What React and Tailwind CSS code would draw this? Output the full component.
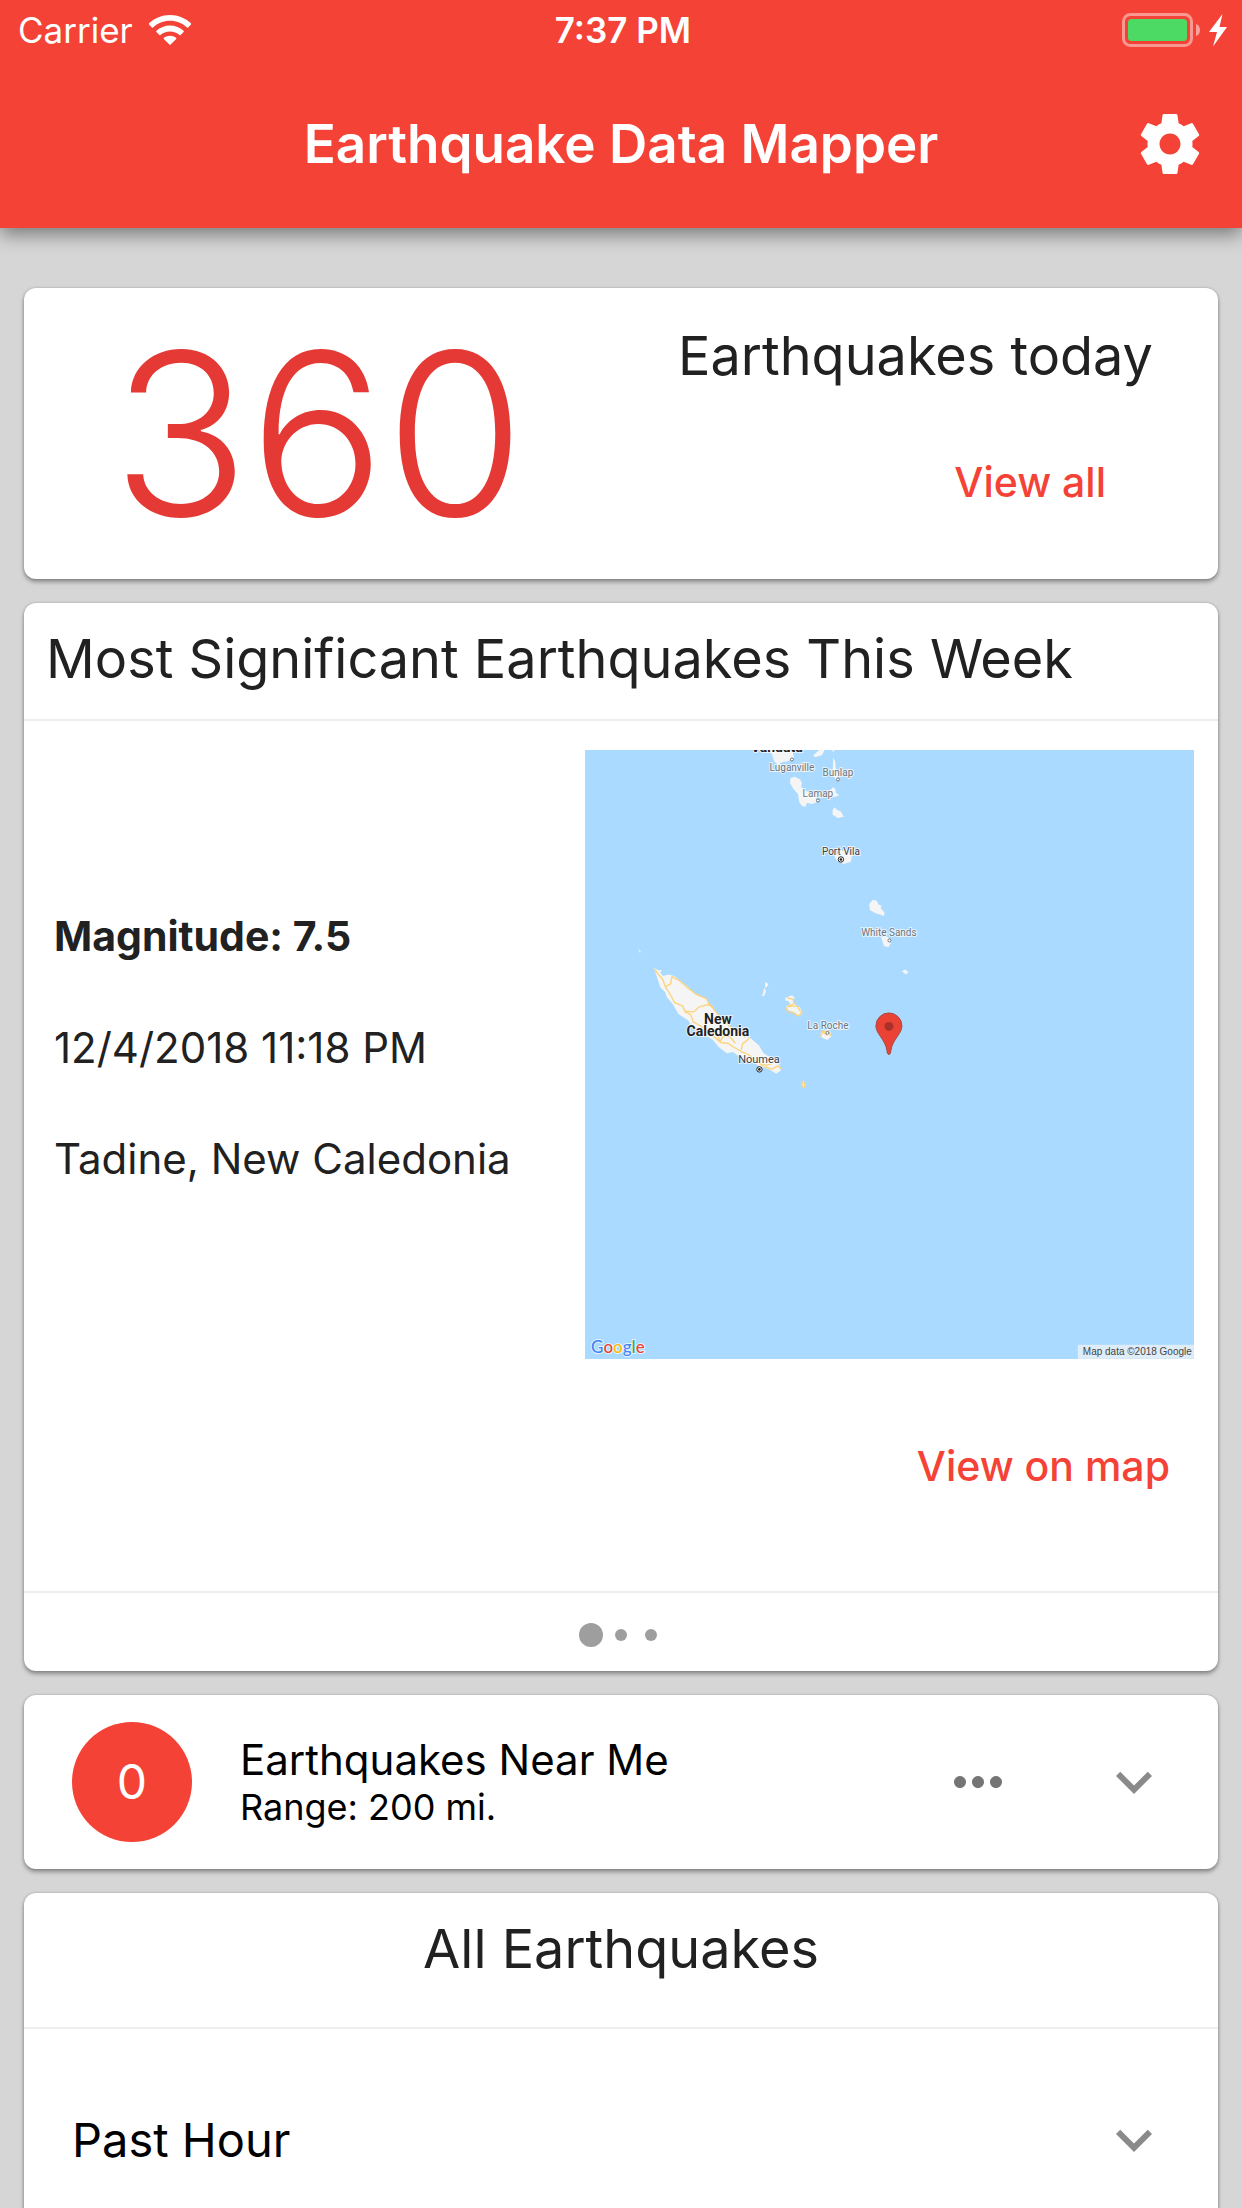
import React from "react";
import { MdExpandMore, MdMoreHoriz } from "react-icons/md";

function WifiIcon() {
  return (
    <svg viewBox="0 0 42 30" className="h-[30px] w-[42px]" fill="currentColor" aria-label="Wi-Fi">
      <path d="M21 0C13 0 5.600 3.100 0 8.300a.8.8 0 0 0 0 1.100l2.900 3c.3.300.8.300 1.100 0C8.600 8.100 14.500 5.700 21 5.700s12.400 2.400 17 6.700c.3.300.8.300 1.100 0l2.900-3a.8.8 0 0 0 0-1.100C36.400 3.100 29 0 21 0Z" />
      <path d="M21 10.500c-5.200 0-10 2-13.600 5.300-.3.300-.3.800 0 1.100l3 3c.3.300.7.300 1 0 2.600-2.200 5.900-3.500 9.600-3.500s7 1.300 9.600 3.500c.3.300.7.300 1 0l3-3c.3-.3.300-.8 0-1.100C31 12.500 26.200 10.500 21 10.500Z" />
      <path d="M21 20.700c-2.300 0-4.400.8-6.100 2.100-.3.300-.4.800-.1 1.100l5.600 5.700c.4.400.8.400 1.200 0l5.600-5.700c.3-.3.200-.8-.1-1.100-1.700-1.300-3.800-2.100-6.100-2.100Z" />
    </svg>
  );
}

function BatteryIcon() {
  return (
    <svg viewBox="0 0 106 36" className="h-9 w-[106px]" aria-label="Battery charging">
      <rect x="1.500" y="2.500" width="68" height="31" rx="7" fill="none" stroke="#fff" strokeOpacity="0.45" strokeWidth="3" />
      <rect x="6" y="7" width="59" height="22" rx="3.500" fill="#4cd964" />
      <path d="M74 12c2.500.6 4 3 4 6s-1.500 5.400-4 6Z" fill="#fff" fillOpacity="0.5" />
      <path d="M100.500 2 87 20h8l-4 14.500L105 15h-7.500Z" fill="#fff" />
    </svg>
  );
}

function GearIcon() {
  return (
    <svg viewBox="0 0 24 24" className="size-[72px]" fill="currentColor" aria-hidden="true">
      <path d="M19.430 12.980c.04-.32.070-.64.070-.98s-.03-.66-.07-.98l2.110-1.650c.19-.15.240-.42.120-.64l-2-3.460c-.12-.22-.39-.3-.61-.22l-2.490 1c-.52-.4-1.080-.73-1.690-.98l-.38-2.650A.488.488 0 0 0 14 2h-4c-.25 0-.46.180-.49.420l-.38 2.650c-.61.250-1.170.59-1.690.98l-2.490-1c-.23-.09-.49 0-.61.220l-2 3.460c-.13.220-.07.490.12.640l2.110 1.650c-.04.320-.07.650-.07.980s.03.660.070.980l-2.110 1.650c-.19.150-.24.420-.12.640l2 3.460c.12.220.39.300.61.220l2.490-1c.52.400 1.080.730 1.690.980l.38 2.650c.03.240.24.420.49.420h4c.25 0 .46-.18.490-.42l.38-2.650c.61-.25 1.170-.59 1.690-.98l2.490 1c.23.090.49 0 .61-.22l2-3.460c.12-.22.070-.49-.12-.64l-2.110-1.650ZM12 15.500c-1.930 0-3.500-1.570-3.500-3.500s1.570-3.500 3.500-3.500 3.500 1.570 3.500 3.500-1.570 3.500-3.500 3.500Z" />
    </svg>
  );
}

const places = [
  { name: "Luganville", x: 207, y: 21, color: "#70757a", size: 10 },
  { name: "Bunlap", x: 253, y: 26, color: "#70757a", size: 10 },
  { name: "Lamap", x: 233, y: 47, color: "#70757a", size: 10 },
  { name: "White Sands", x: 304, y: 186, color: "#70757a", size: 10 },
  { name: "La Roche", x: 243, y: 279, color: "#70757a", size: 10 },
  { name: "Port Vila", x: 256, y: 105, color: "#3c4043", size: 10 },
  { name: "Noumea", x: 174, y: 313, color: "#3c4043", size: 11 },
];

const towns = [
  [207, 9.500], [253, 29.500], [233, 50.500], [304.500, 190.500], [242.500, 283],
];

function EpicenterMap() {
  return (
    <svg viewBox="0 0 609 609" className="aspect-square w-full bg-[#aadaff]" role="img" aria-label="Map of New Caledonia">
      <g transform="translate(-5 -10) scale(.3333)" fill="#f5f5f5" strokeLinejoin="round">
        <path d="M570 30h67l5 22-18 12-16 2-14 8-12-12-4-14Z" />
        <path d="M700 46l18-16h16l-8 16-20 6Z" />
        <path d="M756 30h6v8ZM760 52l6 14 2 22 8 22-8 10-10-18Z" />
        <path d="M632 114l12-4 16 8 6 10-2 14 12 10 34 10-2 26-14 4-12-4-6 12-10-2-8-12-4-24-14-16-10-18Z" />
        <path d="M744 156l16-14 6 4 2 12 10 8-16 6-20-4Z" />
        <path d="M758 210l6-8 8 8 10 4 10 16-18 4-16-10Z" />
        <path d="M764 350l20-18 16 2 16 16-4 16-22 6-20-10Z" />
        <path d="M868 492l10-12 12 2 6 12 10 4-4 6 12 14-2 10-30-10-12-8Z" />
        <path d="M904 592l14-4 10 8 4 14-6 12-14-4Z" />
        <path d="M966 694l10-5 10 7-8 8Z" />
        <path d="M174 626l8 8-2 6ZM556 726l10 6-6 10h-5ZM554 742l4 12-4 12-8 4Z" />
        <path d="M222 684l12 6 13 2-6 6 8 10 16-4 18 4 20 16 20 16 22 22 34 14 8 14 12 16 20 22 20 22 20 18 24 16 28 10 26 22 14 24 30 18 18 18 4 16-14 10-22-14-26-8-30-16-28-10-24-18-18 4-24-18-18-22-36-22-22-10-16-26-30-20-16-28-18-22-6-16-14-14Z" />
        <path d="M616 774l20-8 8 6-4 14 10 12 10 4 8 18-12 10-12-12-20-8-6-12 14-4-6-10-10-2Z" />
        <path d="M722 878l16-8 14 4 2 16-12 10-18-8Z" />
        <path d="M664 1026l8-2 6 12-8 8Z" />
      </g>
      <g transform="translate(-5 -10) scale(.3333)" fill="none" stroke="#fbd37b" strokeWidth="4" strokeLinejoin="round">
        <path d="M224 688l10 14 14 16 8 22 16 26 12 22 24 10 8 18 16 8 8 22 28 16 18 12 14 14 22 20 22 2 14 10 28 16 22 10 20 18 24 16 24 8 18-10 12 10" />
        <path d="M256 740l16-8 4-22 22 12 26 22 26 20 30 12 6 14 14 16 20 26 26 24 30 26 22 10" />
        <path d="M316 814l26 2 14-14 26-8 20 8M484 930l4-18 20-16M420 906l10-18 20 2 16 20M400 870l12 14 8 20M540 970l20 6 14-4" />
        <path d="M622 774l18 4 2 14-20 8 30-2 8 14 6 8-12 8-14-10-16-2-6-12M722 890l6-16 20 2 4 12M728 876l14 10M666 1026l8 4v12l-8-2Z" />
      </g>

      <g fill="#fff" stroke="#70757a" strokeWidth="1">
        {towns.map(([x, y]) => (
          <circle key={`${x}-${y}`} cx={x} cy={y} r="1.500" />
        ))}
      </g>
      {[[256, 109.500], [174.500, 319.500]].map(([x, y]) => (
        <g key={x}>
          <circle cx={x} cy={y} r="2.700" fill="#fff" stroke="#222" strokeWidth="1" />
          <circle cx={x} cy={y} r="1.300" fill="#222" />
        </g>
      ))}

      <g textAnchor="middle" stroke="#fff" strokeOpacity="0.7" strokeWidth="2" paintOrder="stroke" className="font-[Roboto,sans-serif]">
        {places.map((p) => (
          <text key={p.name} x={p.x} y={p.y} fontSize={p.size} fill={p.color}>
            {p.name}
          </text>
        ))}
        <g fontSize="14" fontWeight="700" fill="#222">
          <text x="192" y="2">Vanuatu</text>
          <text x="133" y="274">New</text>
          <text x="133" y="286">Caledonia</text>
        </g>
      </g>

      <path d="M304 304.500c-1.400 0-1.700-1.500-2-4-.8-5.500-3.400-9.500-6.500-14-2.600-3.800-4.500-7-4.500-10.500a13 13 0 0 1 26 0c0 3.500-1.900 6.700-4.500 10.500-3.100 4.500-5.700 8.500-6.500 14-.3 2.500-.6 4-2 4Z" fill="#ea4335" stroke="#a5493f" strokeWidth="1" />
      <circle cx="304" cy="276.500" r="4.500" fill="#ab3128" />

      <text x="6" y="603" fontSize="17" fontWeight="500" stroke="#fff" strokeOpacity="0.7" strokeWidth="2" paintOrder="stroke" className="font-[Lato,sans-serif]">
        <tspan fill="#4285f4">G</tspan>
        <tspan fill="#ea4335">o</tspan>
        <tspan fill="#fbbc05">o</tspan>
        <tspan fill="#4285f4">g</tspan>
        <tspan fill="#34a853">l</tspan>
        <tspan fill="#ea4335">e</tspan>
      </text>

      <rect x="493" y="595" width="116" height="14" fill="#f5f5f5" fillOpacity="0.7" />
      <text x="607" y="605" textAnchor="end" fontSize="10" fill="#444" className="font-['Liberation_Sans',sans-serif]">
        Map data ©2018 Google
      </text>
    </svg>
  );
}

function Card({ children, className = "" }) {
  return (
    <section className={`shrink-0 rounded-xl bg-white shadow-[0_3px_4px_rgba(0,0,0,0.34),0_0_3px_rgba(0,0,0,0.2)] ${className}`}>
      {children}
    </section>
  );
}

export default function App() {
  return (
    <div className="flex h-screen flex-col overflow-hidden bg-[#d6d6d6] font-[Inter,sans-serif] text-[#212121]">
      <header className="relative z-10 shrink-0 bg-[#f44336] text-white shadow-[0_6px_18px_rgba(0,0,0,0.45)]">
        <div className="grid h-[60px] grid-cols-3 items-center pt-1 pr-[14px] pl-[18px] text-[35px] leading-10">
          <div className="flex items-center gap-4 pb-1">
            <span>Carrier</span>
            <WifiIcon />
          </div>
          <time className="pb-1 text-center font-semibold">7:37 PM</time>
          <div className="flex justify-end pb-1">
            <BatteryIcon />
          </div>
        </div>
        <div className="grid h-[168px] grid-cols-[1fr_auto_1fr] items-center px-9">
          <h1 className="col-start-2 text-[53px] leading-[72px] font-semibold">Earthquake Data Mapper</h1>
          <button type="button" aria-label="Settings" className="justify-self-end">
            <GearIcon />
          </button>
        </div>
      </header>

      <main className="flex min-h-0 flex-1 flex-col gap-6 overflow-y-auto px-6 pt-[60px] [scrollbar-width:none]">
        <Card className="grid grid-cols-2">
          <div className="flex items-center justify-center pr-2 text-[226px] leading-[220px] font-light text-[#e53935]">360</div>
          <div className="flex flex-col pt-9 pb-[49px]">
            <h2 className="pr-2 text-center text-[54px] leading-[64px]">Earthquakes today</h2>
            <button type="button" className="mt-[46px] mr-16 h-24 self-end px-12 text-[41px] leading-[50px] font-medium text-[#f44336]">
              View all
            </button>
          </div>
        </Card>

        <Card>
          <h2 className="border-b-2 border-[#eeeeee] px-[22px] pt-6 pb-7 text-[54px] leading-[64px]">
            Most Significant Earthquakes This Week
          </h2>
          <div className="flex items-center pt-[29px]">
            <div className="flex flex-1 flex-col gap-[60px] pb-[14px] pl-[30px] text-[42px] leading-[51px]">
              <p className="text-[41px] font-bold">Magnitude: 7.5</p>
              <p>12/4/2018 11:18 PM</p>
              <p>Tadine, New Caledonia</p>
            </div>
            <div className="w-[53%] pr-6">
              <EpicenterMap />
            </div>
          </div>
          <div className="flex justify-end border-b-2 border-[#eeeeee] pt-[59px] pb-[77px]">
            <button type="button" className="h-24 px-12 text-[41px] leading-[50px] font-medium text-[#f44336]">
              View on map
            </button>
          </div>
          <div className="flex justify-center pt-[30px] pb-6">
            {["size-6", "size-3", "size-3"].map((size, i) => (
              <button key={i} type="button" aria-label={`Page ${i + 1}`} className="flex h-6 w-[30px] items-center justify-center">
                <span className={`rounded-full bg-[#9e9e9e] ${size}`} />
              </button>
            ))}
          </div>
        </Card>

        <Card className="flex items-center px-12 py-[27px]">
          <div className="flex size-[120px] items-center justify-center rounded-full bg-[#f44336] text-[48px] text-white">0</div>
          <div className="ml-12 flex-1 text-black">
            <h2 className="text-[42px] leading-[50px]">Earthquakes Near Me</h2>
            <p className="text-[36px] leading-[44px]">Range: 200 mi.</p>
          </div>
          <button type="button" aria-label="More options" className="mr-[84px] text-[#757575]">
            <MdMoreHoriz className="size-[72px]" />
          </button>
          <button type="button" aria-label="Expand nearby earthquakes" className="text-[#8a8a8a]">
            <MdExpandMore className="size-[72px]" />
          </button>
        </Card>

        <Card>
          <h2 className="border-b-2 border-[#eeeeee] pt-6 pb-[46px] text-center text-[54px] leading-[64px]">All Earthquakes</h2>
          <button type="button" className="flex h-[222px] w-full items-center justify-between px-12 text-[47px] text-black">
            <span>Past Hour</span>
            <MdExpandMore className="size-[72px] text-[#8a8a8a]" />
          </button>
        </Card>
      </main>
    </div>
  );
}
